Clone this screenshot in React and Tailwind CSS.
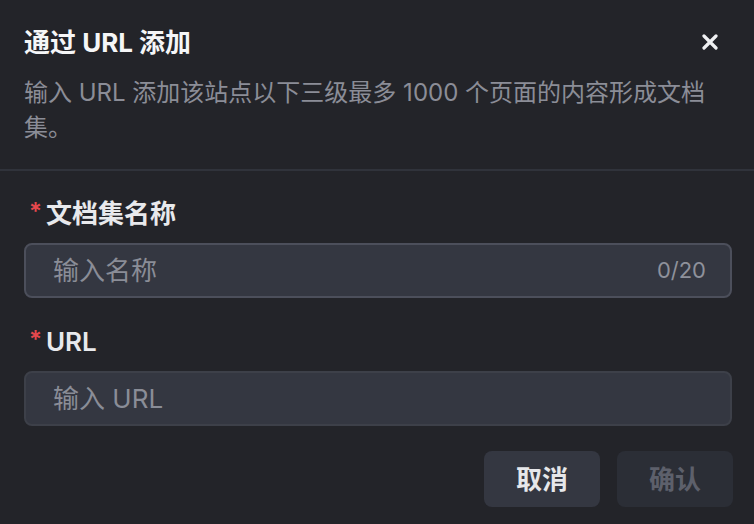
const font = { fontFamily: '"Inter", "Noto Sans CJK SC", sans-serif' }

function Label({ children }) {
  return (
    <div className="flex items-center h-[32px] text-[26px] font-semibold text-[#e8e9ec]">
      <span className="relative -top-[1px] ml-[5px] mr-[4px] text-[24px] leading-none text-[#e5484d]">*</span>
      <span>{children}</span>
    </div>
  )
}

function Field({ placeholder, count, strong }) {
  return (
    <div
      className={
        'flex items-center justify-between h-[55px] rounded-[8px] border-2 bg-[#343741] pl-[27px] pr-[24px] ' +
        (strong ? 'border-[#4c4f5b]' : 'border-[#3d4049]')
      }
    >
      <span className="text-[26px] text-[#8a8d97]">{placeholder}</span>
      {count && <span className="text-[22px] text-[#8e919b]">{count}</span>}
    </div>
  )
}

export default function App() {
  return (
    <div className="w-[754px] h-[524px] bg-[#232429] overflow-hidden" style={font}>
      <div className="pl-6 pr-[22px] pt-[26px] pb-[24px]">
        <div className="flex items-center justify-between h-[32px]">
          <h2 className="text-[26px] font-bold text-[#f5f6f7]">通过 URL 添加</h2>
          <svg width="16" height="16" viewBox="0 0 16 16" className="mr-[14px]">
            <path d="M2 2L14 14M14 2L2 14" stroke="#f0f1f3" strokeWidth="3.2" strokeLinecap="round" />
          </svg>
        </div>
        <p className="mt-[17px] max-w-[696px] text-[24px] leading-[35px] text-[#8b8d97]">
          输入 URL 添加该站点以下三级最多 1000 个页面的内容形成文档集。
        </p>
      </div>
      <div className="h-[2px] bg-[#30333b]" />
      <div className="pl-6 pr-[22px] pt-[26px]">
        <Label>文档集名称</Label>
        <div className="mt-[14px]">
          <Field placeholder="输入名称" count="0/20" strong />
        </div>
        <div className="mt-[27px]">
          <Label>URL</Label>
        </div>
        <div className="mt-[14px]">
          <Field placeholder="输入 URL" />
        </div>
        <div className="mt-[25px] -mr-[1px] flex justify-end gap-[17px]">
          <button className="w-[116px] h-[56px] rounded-[8px] bg-[#343741] text-[26px] font-bold text-[#e6e7ea]">
            取消
          </button>
          <button className="w-[116px] h-[56px] rounded-[8px] bg-[#2b2e36] text-[26px] font-bold text-[#5d606b]">
            确认
          </button>
        </div>
      </div>
    </div>
  )
}
